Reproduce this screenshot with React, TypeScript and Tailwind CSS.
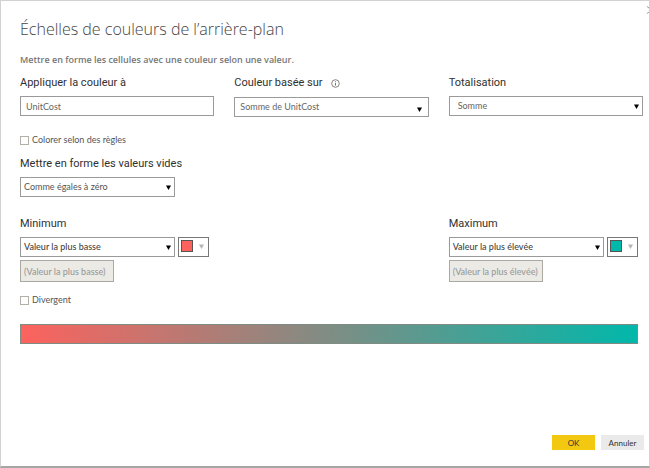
import { useState } from "react";
import type { ReactNode } from "react";

function Caret({ className }: { className: string }) {
  return (
    <svg viewBox="0 0 5 5" className={className} aria-hidden="true">
      <path d="M0 0.5h5L2.5 5z" fill="currentColor" />
    </svg>
  );
}

function Label({ htmlFor, children }: { htmlFor: string; children: ReactNode }) {
  return (
    <label htmlFor={htmlFor} className="block font-['Roboto','Open_Sans',sans-serif] text-[11px] leading-[18px] text-[#303030]">
      {children}
    </label>
  );
}

function Select({
  id,
  value,
  className,
  caret = "top-2 right-1 size-[5px]",
}: {
  id: string;
  value: string;
  className: string;
  caret?: string;
}) {
  return (
    <div className="relative min-w-0 flex-1">
      <select
        id={id}
        defaultValue={value}
        className={`block h-5 w-full appearance-none border border-[#9a9a9a] bg-white text-[9px] leading-4 outline-none ${className}`}
      >
        <option>{value}</option>
      </select>
      <Caret className={`pointer-events-none absolute text-black ${caret}`} />
    </div>
  );
}

function Check({ id, children }: { id: string; children: ReactNode }) {
  return (
    <div className="flex h-4 items-center gap-[3px]">
      <input
        id={id}
        type="checkbox"
        className="size-[9px] appearance-none border border-[#b3b0a8] bg-white checked:bg-[#777]"
      />
      <label htmlFor={id} className="text-[9px] leading-4 text-[#555]">
        {children}
      </label>
    </div>
  );
}

function Bound({ id, title, option, swatch }: { id: string; title: string; option: string; swatch: string }) {
  return (
    <div className="max-w-[189px]">
      <Label htmlFor={id}>{title}</Label>
      <div className="mt-1 flex gap-[3px]">
        <Select id={id} value={option} className="px-[3px] font-medium text-[#444]" />
        <button
          type="button"
          aria-label={`Couleur ${title}`}
          className="flex h-5 w-[31px] items-center justify-between border border-[#777] bg-white pr-1 pb-[2px] pl-[2px]"
        >
          <span className={`size-3 border border-[#555] ${swatch}`} />
          <Caret className="size-[5px] text-[#b5b5b5]" />
        </button>
      </div>
      <input
        disabled
        aria-label={`Valeur ${title}`}
        value={`(${option})`}
        className="mt-[3px] block h-[22px] w-[94px] border border-[#aaa9a3] bg-[#ebeae4] px-[3px] text-[9px] leading-4 font-medium text-[#999]"
      />
    </div>
  );
}

export default function App() {
  const [target, setTarget] = useState("UnitCost");
  return (
    <main className="relative flex min-h-screen flex-col border border-b-2 border-[#d2d2d2] border-b-[#a6a6a6] bg-white pl-[19px] font-['Lato','Open_Sans',sans-serif]">
      <svg viewBox="0 0 2 8" className="absolute top-[5px] right-0 h-2 w-[2px]" stroke="#999" aria-hidden="true">
        <path d="M0 0.5l2 1.5M0 7.5l2-1.5" />
      </svg>
      <h1 className="mt-4 font-['Open_Sans','Noto_Sans',sans-serif] text-[16px] leading-6 font-light text-[#444]">
        Échelles de couleurs de l’arrière-plan
      </h1>
      <p className="mt-[11px] font-['Open_Sans','Noto_Sans',sans-serif] text-[9px] leading-4 font-semibold text-[#777]">
        Mettre en forme les cellules avec une couleur selon une valeur.
      </p>

      <div className="mt-[6px] mr-[6px] grid grid-cols-3 gap-5">
        <div>
          <Label htmlFor="target">Appliquer la couleur à</Label>
          <input
            id="target"
            value={target}
            onChange={(e) => setTarget(e.target.value)}
            className="mt-1 block h-5 w-full border border-[#9a9a9a] px-[5px] text-[9px] leading-4 text-[#666] outline-none"
          />
        </div>
        <div>
          <div className="flex items-center gap-2">
            <Label htmlFor="basis">Couleur basée sur</Label>
            <svg viewBox="0 0 9 9" className="size-[9px]" fill="none" stroke="#6b665c" aria-hidden="true">
              <circle cx="4.5" cy="4.5" r="3.8" strokeWidth="0.8" />
              <path d="M4.5 4v2.6M4.5 2.3v0.9" strokeWidth="0.9" />
            </svg>
          </div>
          <div className="mt-[5px] flex">
            <Select
              id="basis"
              value="Somme de UnitCost"
              className="px-[5px] text-[#666]"
              caret="top-[10px] right-[7px] size-[5px]"
            />
          </div>
        </div>
        <div>
          <Label htmlFor="summary">Totalisation</Label>
          <div className="mt-1 flex">
            <Select id="summary" value="Somme" className="px-2 text-[#666]" />
          </div>
        </div>
      </div>

      <div className="mt-[15px]">
        <Check id="rules">Colorer selon des règles</Check>
      </div>

      <div className="mt-[7px]">
        <Label htmlFor="blanks">Mettre en forme les valeurs vides</Label>
        <div className="mt-1 flex max-w-[155px]">
          <Select id="blanks" value="Comme égales à zéro" className="px-[3px] text-[#555]" />
        </div>
      </div>

      <div className="mt-[18px] mr-[6px] grid grid-cols-3 gap-5">
        <Bound id="minimum" title="Minimum" option="Valeur la plus basse" swatch="bg-[#fd625e]" />
        <div className="col-start-3">
          <Bound id="maximum" title="Maximum" option="Valeur la plus élevée" swatch="bg-[#01b8aa]" />
        </div>
      </div>

      <div className="mt-[10px]">
        <Check id="diverging">Divergent</Check>
      </div>

      <div className="mt-4 mr-[11px] h-5 border border-[#7f8c83] bg-linear-to-r/srgb from-[#fd625e] to-[#01b8aa]" />

      <div className="mt-auto mr-[5px] mb-4 flex justify-end gap-[6px] text-[8px] leading-[14px] text-[#333]">
        <button type="button" className="h-[15px] w-[43px] bg-[#f2c811]">
          OK
        </button>
        <button type="button" className="h-[15px] w-[43px] bg-[#eaeaea]">
          Annuler
        </button>
      </div>
    </main>
  );
}
